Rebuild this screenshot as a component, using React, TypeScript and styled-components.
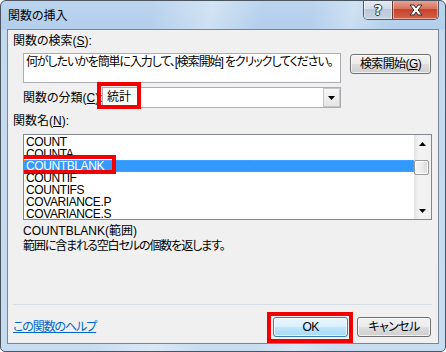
import React from "react";
import styled, { createGlobalStyle } from "styled-components";

const Global = createGlobalStyle`
  html, body { margin: 0; padding: 0; background: #ffffff; }
  body {
    font-family: "Liberation Sans", "Noto Sans CJK JP", sans-serif;
    font-size: 12px;
    color: #000;
    font-feature-settings: "palt";
  }
  * { box-sizing: border-box; }
`;

const Window = styled.div`
  width: 446px;
  height: 352px;
  border: 1px solid #4b5562;
  border-radius: 6px 6px 5px 5px;
  background:
    linear-gradient(100deg, rgba(255,255,255,0) 30%, rgba(255,255,255,0.35) 42%, rgba(255,255,255,0) 52%, rgba(255,255,255,0) 62%, rgba(255,255,255,0.3) 70%, rgba(255,255,255,0) 78%),
    linear-gradient(180deg, #bcd5ee 0px, #b3cfec 28px, #c3d9f0 29px, #c8dcf1 100%);
  display: flex;
  flex-direction: column;
  padding: 0 6px 7px 6px;
  overflow: hidden;
`;

const TitleBar = styled.div`
  height: 28px;
  display: flex;
  align-items: flex-start;
`;

const TitleText = styled.div`
  padding: 8px 0 0 1px;
  font-size: 12px;
  line-height: 15px;
  color: #000;
  flex: 1;
`;

const CaptionButtons = styled.div`
  display: flex;
  margin-top: -1px;
  height: 20px;
  border: 1px solid #4f5967;
  border-top: none;
  border-radius: 0 0 5px 5px;
  overflow: hidden;
`;

const CaptionButton = styled.div<{ $kind: "help" | "close" }>`
  width: ${(p) => (p.$kind === "help" ? "28px" : "46px")};
  height: 100%;
  display: flex;
  align-items: center;
  justify-content: center;
  border-left: ${(p) => (p.$kind === "close" ? "1px solid #6b3a33" : "none")};
  background: ${(p) =>
    p.$kind === "help"
      ? "linear-gradient(180deg, #e7edf4 0%, #d3dce7 45%, #bac8d8 50%, #c7d4e2 100%)"
      : "linear-gradient(180deg, #e9a697 0%, #d9735e 45%, #c8432a 50%, #d4614a 100%)"};
  box-shadow: inset 0 0 0 1px rgba(255,255,255,0.45);
  color: #fff;
  font-family: "DejaVu Sans", sans-serif;
  font-weight: bold;
  font-size: 14px;
  text-shadow: 0 0 1px #2c3540, 1px 0 0 #2c3540, -1px 0 0 #2c3540, 0 1px 0 #2c3540, 0 -1px 0 #2c3540;
`;

const Client = styled.div`
  flex: 1;
  border: 1px solid #7a8694;
  background: #f0f0f0;
  display: flex;
  flex-direction: column;
  padding: 0 5px 6px 5px;
`;

const Label = styled.div<{ $top: number }>`
  margin-top: ${(p) => p.$top}px;
  line-height: 16px;
  height: 16px;
  white-space: nowrap;
`;

const SearchRow = styled.div`
  margin-top: 4px;
  padding-left: 10px;
  display: flex;
  gap: 9px;
  align-items: flex-start;
`;

const TextBox = styled.div`
  width: 318px;
  height: 30px;
  background: #fff;
  border: 1px solid #abadb3;
  padding: 1px 2px;
  line-height: 15px;
  letter-spacing: -1.1px;
  white-space: nowrap;
  overflow: hidden;
`;

const Button = styled.div<{ $default?: boolean; $w: number }>`
  width: ${(p) => p.$w}px;
  height: 20px;
  border: 1px solid ${(p) => (p.$default ? "#3c7fb1" : "#707070")};
  border-radius: 3px;
  background: ${(p) =>
    p.$default
      ? "linear-gradient(180deg, #eaf6fd 0%, #d9f0fc 48%, #bee6fd 52%, #a7d9f5 100%)"
      : "linear-gradient(180deg, #f2f2f2 0%, #ebebeb 48%, #dddddd 52%, #cfcfcf 100%)"};
  box-shadow: inset 0 0 0 1px rgba(255,255,255,0.7);
  display: flex;
  align-items: center;
  justify-content: center;
  line-height: 14px;
  letter-spacing: -0.6px;
  white-space: nowrap;
  position: relative;
`;

const SearchButton = styled(Button)`
  margin-top: 1px;
`;

const CategoryRow = styled.div`
  margin-top: 4px;
  padding-left: 10px;
  display: flex;
  align-items: center;
`;

const CategoryLabel = styled.div`
  width: 79px;
  white-space: nowrap;
  line-height: 16px;
`;

const Combo = styled.div`
  position: relative;
  width: 239px;
  height: 21px;
  background: #fff;
  border: 1px solid #abadb3;
  display: flex;
  align-items: stretch;
`;

const ComboText = styled.div`
  flex: 1;
  padding: 2px 0 0 4px;
  line-height: 15px;
`;

const ComboArrow = styled.div`
  width: 17px;
  border: 1px solid #c7c7c7;
  background: linear-gradient(180deg, #f7f7f7 0%, #e6e6e6 100%);
  display: flex;
  align-items: center;
  justify-content: center;
`;

const RedMark = styled.div<{ $l: number; $t: number; $w: number; $h: number }>`
  position: absolute;
  left: ${(p) => p.$l}px;
  top: ${(p) => p.$t}px;
  width: ${(p) => p.$w}px;
  height: ${(p) => p.$h}px;
  border: 4px solid #f00000;
  pointer-events: none;
`;

const ListBox = styled.div`
  margin: 5px 0 0 10px;
  width: 409px;
  height: 86px;
  background: #fff;
  border: 1px solid #828790;
  display: flex;
  overflow: hidden;
`;

const Items = styled.div`
  flex: 1;
  padding-top: 1px;
  overflow: hidden;
`;

const Item = styled.div<{ $selected?: boolean }>`
  position: relative;
  height: 12px;
  line-height: 12px;
  padding-left: 2px;
  letter-spacing: -0.4px;
  white-space: nowrap;
  background: ${(p) => (p.$selected ? "#3399ff" : "transparent")};
  color: ${(p) => (p.$selected ? "#fff" : "#000")};
  outline: ${(p) => (p.$selected ? "1px dotted #d98a1c" : "none")};
  outline-offset: -1px;
`;

const ScrollBar = styled.div`
  width: 17px;
  background: linear-gradient(90deg, #e3e3e3 0%, #f3f3f3 30%, #f0f0f0 100%);
  display: flex;
  flex-direction: column;
`;

const ScrollArrow = styled.div`
  height: 17px;
  display: flex;
  align-items: center;
  justify-content: center;
`;

const ScrollTrack = styled.div`
  flex: 1;
  padding-top: 8px;
`;

const Thumb = styled.div`
  width: 15px;
  height: 15px;
  border: 1px solid #979797;
  border-radius: 2px;
  background: linear-gradient(90deg, #f3f3f3 0%, #ececec 50%, #d8d8d8 100%);
  box-shadow: inset 0 0 0 1px #fff;
`;

const Desc = styled.div`
  margin: 4px 0 0 10px;
  line-height: 15px;
  white-space: nowrap;
`;

const DescLine = styled.div<{ $tight?: boolean }>`
  letter-spacing: ${(p) => (p.$tight ? "-1.1px" : "0")};
`;

const Spacer = styled.div`
  flex: 1;
`;

const Separator = styled.div`
  height: 1px;
  background: #d5dfe5;
  margin-right: 1px;
`;

const BottomRow = styled.div`
  margin-top: 12px;
  height: 20px;
  display: flex;
  align-items: center;
  padding-right: 2px;
`;

const HelpLink = styled.a`
  color: #0066cc;
  text-decoration: underline;
  line-height: 14px;
  letter-spacing: -1.1px;
  flex: 1;
  cursor: pointer;
`;

const ButtonGroup = styled.div`
  display: flex;
  gap: 9px;
`;

const Triangle = ({ dir }: { dir: "up" | "down" }) => (
  <svg width="7" height="4" viewBox="0 0 7 4">
    {dir === "down" ? (
      <path d="M0 0 H7 L3.5 4 Z" fill="#000" />
    ) : (
      <path d="M0 4 H7 L3.5 0 Z" fill="#000" />
    )}
  </svg>
);

const CloseGlyph = () => (
  <svg width="16" height="12" viewBox="0 0 16 12">
    <path
      d="M2 1 H6 L8 4 L10 1 H14 L10.2 6 L14 11 H10 L8 8 L6 11 H2 L5.8 6 Z"
      fill="#fff"
      stroke="#3b2a28"
      strokeWidth="1"
      strokeLinejoin="round"
    />
  </svg>
);

const functions = ["COUNT", "COUNTA", "COUNTBLANK", "COUNTIF", "COUNTIFS", "COVARIANCE.P", "COVARIANCE.S"];

export default function App() {
  return (
    <>
      <Global />
      <Window>
        <TitleBar>
          <TitleText>関数の挿入</TitleText>
          <CaptionButtons>
            <CaptionButton $kind="help">?</CaptionButton>
            <CaptionButton $kind="close">
              <CloseGlyph />
            </CaptionButton>
          </CaptionButtons>
        </TitleBar>
        <Client>
          <Label $top={3}>
            関数の検索(<u>S</u>):
          </Label>
          <SearchRow>
            <TextBox>何がしたいかを簡単に入力して、[検索開始] をクリックしてください。</TextBox>
            <SearchButton $w={81}>
              検索開始(<u>G</u>)
            </SearchButton>
          </SearchRow>
          <CategoryRow>
            <CategoryLabel>
              関数の分類(<u>C</u>):
            </CategoryLabel>
            <Combo>
              <ComboText>統計</ComboText>
              <ComboArrow>
                <Triangle dir="down" />
              </ComboArrow>
              <RedMark $l={-6} $t={-6} $w={44} $h={27} />
            </Combo>
          </CategoryRow>
          <Label $top={5}>
            関数名(<u>N</u>):
          </Label>
          <ListBox>
            <Items>
              {functions.map((f) => (
                <Item key={f} $selected={f === "COUNTBLANK"}>
                  {f}
                  {f === "COUNTBLANK" && <RedMark $l={-9} $t={-5} $w={101} $h={19} />}
                </Item>
              ))}
            </Items>
            <ScrollBar>
              <ScrollArrow>
                <Triangle dir="up" />
              </ScrollArrow>
              <ScrollTrack>
                <Thumb />
              </ScrollTrack>
              <ScrollArrow>
                <Triangle dir="down" />
              </ScrollArrow>
            </ScrollBar>
          </ListBox>
          <Desc>
            <DescLine>COUNTBLANK(範囲)</DescLine>
            <DescLine $tight>範囲に含まれる空白セルの個数を返します。</DescLine>
          </Desc>
          <Spacer />
          <Separator />
          <BottomRow>
            <HelpLink>この関数のヘルプ</HelpLink>
            <ButtonGroup>
              <Button $w={75} $default>
                OK
                <RedMark $l={-7} $t={-6} $w={86} $h={31} />
              </Button>
              <Button $w={74}>キャンセル</Button>
            </ButtonGroup>
          </BottomRow>
        </Client>
      </Window>
    </>
  );
}
